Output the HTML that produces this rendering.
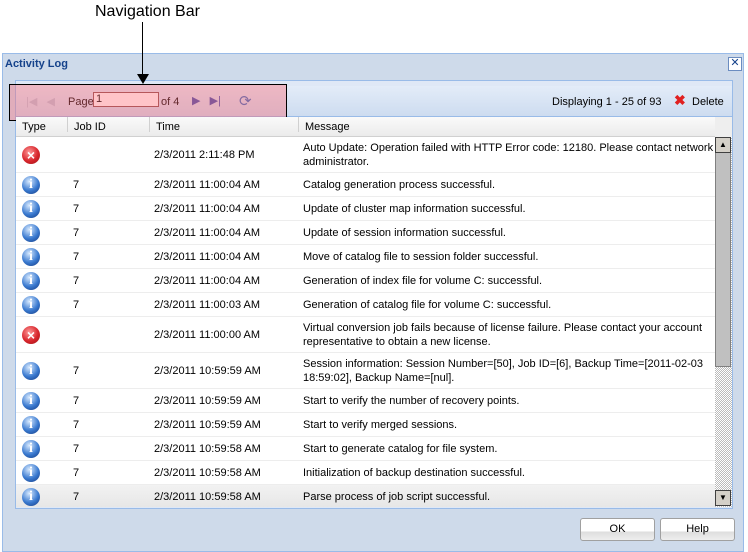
<!DOCTYPE html><html><head><style>
body{margin:0;width:748px;height:552px;background:#fff;font-family:"Liberation Sans",sans-serif;font-size:11px;position:relative;overflow:hidden;color:#000}
.a{position:absolute}
.win{left:2px;top:53px;width:742px;height:499px;background:#cedaea;border:1px solid #99bbe8;box-sizing:border-box}
.panel{left:15px;top:80px;width:718px;height:429px;background:#dfe8f6;border:1px solid #99bbe8;box-sizing:border-box}
.tb{left:16px;top:86px;width:716px;height:30px;background:linear-gradient(#e3ecf8,#cddcf0);border-bottom:1px solid #99bbe8}
.hd{left:16px;top:117px;width:699px;height:19px;background:linear-gradient(#fafafa,#ebebeb);border-bottom:1px solid #d0d0d0}
.hd span{position:absolute;border-left:1px solid #d0d0d0;height:15px;top:0;padding:4px 0 0 6px;box-sizing:border-box}
.grid{left:16px;top:137px;width:699px;height:370px;background:#fff;overflow:hidden}
.r{position:absolute;left:0;width:699px;border-bottom:1px solid #ededed;box-sizing:border-box}
.r div{position:absolute}
.ic{left:6px;width:18px;height:18px;border-radius:50%}
.err{background:radial-gradient(circle at 40% 35%,#ff9a9a,#d8262c 55%,#9a1015);color:#fff;font-size:14px;font-weight:bold;text-align:center;line-height:18px}
.inf{background:radial-gradient(circle at 40% 30%,#d8eaff,#3a7ad0 55%,#12367e);color:#fff;font-size:14px;font-weight:bold;text-align:center;line-height:18px;font-family:"Liberation Serif",serif}
.btn{top:518px;width:73px;height:21px;border:1px solid #a0a0a0;border-radius:3px;background:linear-gradient(#fff 60%,#ddd 60%,#eee);text-align:center;line-height:21px;font-size:11px}
</style></head><body>
<div class="a" style="left:95px;top:3px;font-size:16px">Navigation Bar</div>
<div class="a win"></div>
<div class="a" style="left:5px;top:58px;font-weight:bold;color:#15428b;font-size:11px">Activity Log</div>
<div class="a" style="left:728px;top:57px;width:12px;height:12px;border:1px solid #6b8cc0;background:#fff;font-size:11px;line-height:11px;text-align:center;color:#15428b">✕</div>
<div class="a panel"></div>
<div class="a tb"></div>
<div class="a" style="left:26px;top:95px;color:#b8c4d8;font-size:11px">|◀ &nbsp; ◀</div>
<div class="a" style="left:68px;top:96px">Page</div>
<div class="a" style="left:93px;top:92px;width:66px;height:15px;border:1px solid #8a5050;background:#fff;padding-left:2px;box-sizing:border-box;line-height:13px">1</div>
<div class="a" style="left:161px;top:96px">of 4</div>
<div class="a" style="left:192px;top:94px;color:#4050b0;font-size:11px">▶ &nbsp; ▶|</div>
<div class="a" style="left:239px;top:92px;color:#3a70c0;font-size:15px">⟳</div>
<div class="a" style="left:552px;top:96px">Displaying 1 - 25 of 93</div>
<div class="a" style="left:674px;top:92px;color:#e02020;font-size:14px;font-weight:bold">✖</div>
<div class="a" style="left:692px;top:96px">Delete</div>
<div class="a" style="left:9px;top:84px;width:278px;height:37px;border:1px solid #000;background:rgba(255,100,110,0.38);box-sizing:border-box"></div>
<div class="a" style="left:142px;top:22px;width:1px;height:56px;background:#000"></div>
<div class="a" style="left:137px;top:74px;border-left:6px solid transparent;border-right:6px solid transparent;border-top:10px solid #000"></div>
<div class="a hd"><span style="left:0;border:0">Type</span><span style="left:51px">Job ID</span><span style="left:133px">Time</span><span style="left:282px">Message</span></div>
<div class="a" style="left:715px;top:117px;width:17px;height:20px;background:#eee"></div>
<div class="a grid">
<div class="r" style="top:0;height:36px"><div class="ic err" style="top:9px">×</div><div style="left:138px;top:12px">2/3/2011 2:11:48 PM</div><div style="left:287px;top:4px;line-height:14px">Auto Update: Operation failed with HTTP Error code: 12180. Please contact network<br>administrator.</div></div>
<div class="r" style="top:36px;height:24px"><div class="ic inf" style="top:3px">i</div><div style="left:57px;top:6px">7</div><div style="left:138px;top:6px">2/3/2011 11:00:04 AM</div><div style="left:287px;top:6px">Catalog generation process successful.</div></div>
<div class="r" style="top:60px;height:24px"><div class="ic inf" style="top:3px">i</div><div style="left:57px;top:6px">7</div><div style="left:138px;top:6px">2/3/2011 11:00:04 AM</div><div style="left:287px;top:6px">Update of cluster map information successful.</div></div>
<div class="r" style="top:84px;height:24px"><div class="ic inf" style="top:3px">i</div><div style="left:57px;top:6px">7</div><div style="left:138px;top:6px">2/3/2011 11:00:04 AM</div><div style="left:287px;top:6px">Update of session information successful.</div></div>
<div class="r" style="top:108px;height:24px"><div class="ic inf" style="top:3px">i</div><div style="left:57px;top:6px">7</div><div style="left:138px;top:6px">2/3/2011 11:00:04 AM</div><div style="left:287px;top:6px">Move of catalog file to session folder successful.</div></div>
<div class="r" style="top:132px;height:24px"><div class="ic inf" style="top:3px">i</div><div style="left:57px;top:6px">7</div><div style="left:138px;top:6px">2/3/2011 11:00:04 AM</div><div style="left:287px;top:6px">Generation of index file for volume C: successful.</div></div>
<div class="r" style="top:156px;height:24px"><div class="ic inf" style="top:3px">i</div><div style="left:57px;top:6px">7</div><div style="left:138px;top:6px">2/3/2011 11:00:03 AM</div><div style="left:287px;top:6px">Generation of catalog file for volume C: successful.</div></div>
<div class="r" style="top:180px;height:36px"><div class="ic err" style="top:9px">×</div><div style="left:138px;top:12px">2/3/2011 11:00:00 AM</div><div style="left:287px;top:4px;line-height:14px">Virtual conversion job fails because of license failure. Please contact your account<br>representative to obtain a new license.</div></div>
<div class="r" style="top:216px;height:36px"><div class="ic inf" style="top:9px">i</div><div style="left:57px;top:12px">7</div><div style="left:138px;top:12px">2/3/2011 10:59:59 AM</div><div style="left:287px;top:4px;line-height:14px">Session information: Session Number=[50], Job ID=[6], Backup Time=[2011-02-03<br>18:59:02], Backup Name=[nul].</div></div>
<div class="r" style="top:252px;height:24px"><div class="ic inf" style="top:3px">i</div><div style="left:57px;top:6px">7</div><div style="left:138px;top:6px">2/3/2011 10:59:59 AM</div><div style="left:287px;top:6px">Start to verify the number of recovery points.</div></div>
<div class="r" style="top:276px;height:24px"><div class="ic inf" style="top:3px">i</div><div style="left:57px;top:6px">7</div><div style="left:138px;top:6px">2/3/2011 10:59:59 AM</div><div style="left:287px;top:6px">Start to verify merged sessions.</div></div>
<div class="r" style="top:300px;height:24px"><div class="ic inf" style="top:3px">i</div><div style="left:57px;top:6px">7</div><div style="left:138px;top:6px">2/3/2011 10:59:58 AM</div><div style="left:287px;top:6px">Start to generate catalog for file system.</div></div>
<div class="r" style="top:324px;height:24px"><div class="ic inf" style="top:3px">i</div><div style="left:57px;top:6px">7</div><div style="left:138px;top:6px">2/3/2011 10:59:58 AM</div><div style="left:287px;top:6px">Initialization of backup destination successful.</div></div>
<div class="r" style="top:348px;height:24px;background:linear-gradient(#f2f2f2,#e6e6e6)"><div class="ic inf" style="top:3px">i</div><div style="left:57px;top:6px">7</div><div style="left:138px;top:6px">2/3/2011 10:59:58 AM</div><div style="left:287px;top:6px">Parse process of job script successful.</div></div>
</div>
<div class="a" style="left:715px;top:137px;width:17px;height:370px;background:repeating-conic-gradient(#bbb 0 25%,#fff 0 50%) 0 0/2px 2px"></div>
<div class="a" style="left:715px;top:137px;width:16px;height:230px;background:#c0c0c0;border:1px solid #808080;box-sizing:border-box"></div>
<div class="a" style="left:715px;top:137px;width:16px;height:16px;background:#d4d0c8;border:1px solid #404040;box-sizing:border-box;font-size:8px;text-align:center;line-height:14px">▲</div>
<div class="a" style="left:715px;top:490px;width:16px;height:16px;background:#d4d0c8;border:1px solid #404040;box-sizing:border-box;font-size:8px;text-align:center;line-height:14px">▼</div>
<div class="a btn" style="left:580px">OK</div>
<div class="a btn" style="left:660px">Help</div>
</body></html>
